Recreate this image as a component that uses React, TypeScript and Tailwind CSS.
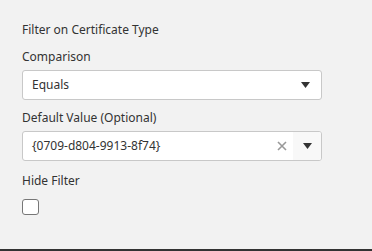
import React from "react";

export default function App() {
  const font = { fontFamily: '"Noto Sans", "Open Sans", sans-serif' };
  return (
    <div className="w-[372px] h-[251px] bg-[#f2f2f2] flex flex-col text-[#333333]" style={font}>
      <div className="flex-1 flex flex-col px-[22px] pt-[22px] w-[344px]">
        <div className="text-[12px] leading-[16px]">Filter on Certificate Type</div>
        <div className="text-[12px] leading-[16px] mt-[11px]">Comparison</div>
        <div className="mt-[5px] h-[30px] bg-white border border-[#c8c8c8] rounded-[3px] flex items-center pl-[9px] pr-[11px]">
          <span className="flex-1 text-[12px]">Equals</span>
          <svg width="9" height="6" viewBox="0 0 9 6"><path d="M0 0H9L4.5 6Z" fill="#333" /></svg>
        </div>
        <div className="text-[12px] leading-[16px] mt-[10px]">Default Value (Optional)</div>
        <div className="mt-[5px] h-[30px] bg-white border border-[#c8c8c8] rounded-[3px] flex items-stretch overflow-hidden">
          <span className="flex-1 flex items-center pl-[9px] text-[12px]">{"{0709-d804-9913-8f74}"}</span>
          <span className="w-[22px] flex items-center justify-center">
            <svg width="10" height="10" viewBox="0 0 10 10"><path d="M1 1L9 9M9 1L1 9" stroke="#999" strokeWidth="1.6" /></svg>
          </span>
          <span className="w-[28px] bg-[#f8f8f8] flex items-center justify-center">
            <svg width="9" height="6" viewBox="0 0 9 6"><path d="M0 0H9L4.5 6Z" fill="#333" /></svg>
          </span>
        </div>
        <div className="text-[12px] leading-[16px] mt-[12px]">Hide Filter</div>
        <div className="mt-[10px] w-[17px] h-[16px] border border-[#777] rounded-[3px] bg-white" />
      </div>
      <div className="h-[2px] bg-[#333]" />
    </div>
  );
}
